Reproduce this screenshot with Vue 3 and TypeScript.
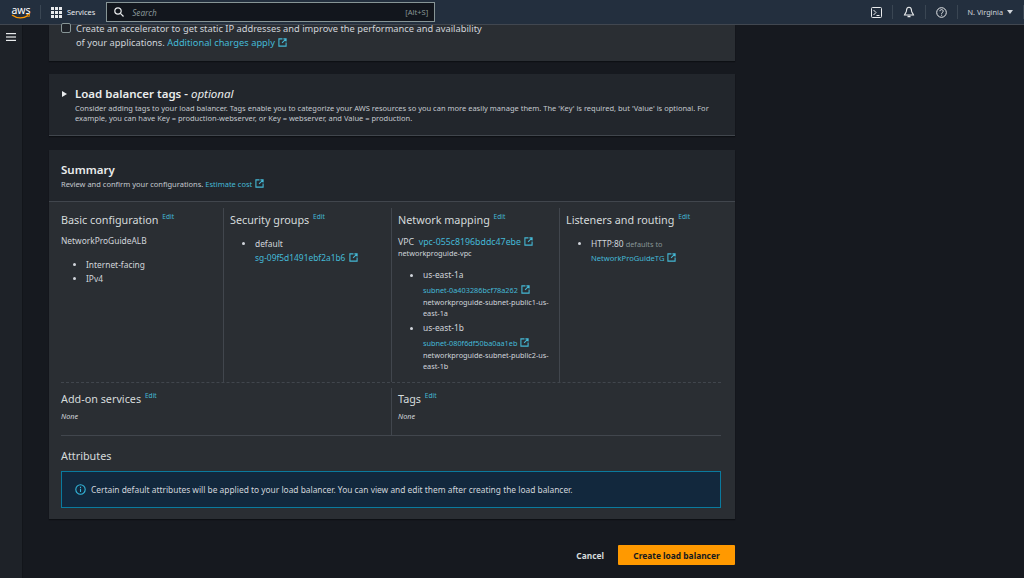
<script setup lang="ts">
interface Sub { zone: string; id: string; name: string }
const subnets: Sub[] = [
  { zone: 'us-east-1a', id: 'subnet-0a403286bcf78a262', name: 'networkproguide-subnet-public1-us-east-1a' },
  { zone: 'us-east-1b', id: 'subnet-080f6df50ba0aa1eb', name: 'networkproguide-subnet-public2-us-east-1b' },
]
</script>

<template>
  <div class="page">
    <header class="top">
      <div class="logo">
        <span class="aws">aws</span>
        <svg class="smile" width="20" height="6" viewBox="0 0 20 6"><path d="M1 1c5 3.600 11 3.600 16 .6" fill="none" stroke="#f90" stroke-width="1.300"/><path d="M15.500 .6l3-.4-.7 2.800" fill="none" stroke="#f90" stroke-width="1"/></svg>
      </div>
      <span class="tsep"></span>
      <svg class="grid-ic" width="11" height="11" viewBox="0 0 11 11" fill="#e9ebed"><rect width="3" height="3"/><rect x="4" width="3" height="3"/><rect x="8" width="3" height="3"/><rect y="4" width="3" height="3"/><rect x="4" y="4" width="3" height="3"/><rect x="8" y="4" width="3" height="3"/><rect y="8" width="3" height="3"/><rect x="4" y="8" width="3" height="3"/><rect x="8" y="8" width="3" height="3"/></svg>
      <span class="svc">Services</span>
      <div class="search">
        <svg width="10" height="10" viewBox="0 0 10 10" fill="none" stroke="#e9ebed" stroke-width="1.200"><circle cx="4" cy="4" r="3.200"/><path d="M6.400 6.400L9.500 9.500"/></svg>
        <span class="ph">Search</span>
        <span class="kbd">[Alt+S]</span>
      </div>
      <div class="tright">
        <svg width="11" height="11" viewBox="0 0 11 11" fill="none" stroke="#e9ebed" stroke-width="1"><rect x=".5" y=".5" width="10" height="10" rx="1"/><path d="M2.500 3l2.500 2.500L2.500 8M5.500 8.500h3"/></svg>
        <span class="isep dotted"></span>
        <svg width="12" height="12" viewBox="0 0 12 12" fill="none" stroke="#e9ebed" stroke-width="1.100"><path d="M6 1.200C4 1.200 3.500 3 3.500 4.500c0 2-1.500 3-2 4.500h9c-.5-1.500-2-2.500-2-4.500C8.500 3 8 1.200 6 1.200z"/><path d="M4.500 10.500h3" stroke-width="1.500"/></svg>
        <span class="isep"></span>
        <svg width="11" height="11" viewBox="0 0 11 11" fill="none" stroke="#e9ebed" stroke-width="1"><circle cx="5.500" cy="5.500" r="4.800"/><path d="M3.900 4.200c0-2.100 3.300-2.100 3.300 0 0 1.200-1.600 1.300-1.600 2.600M5.600 7.700v1"/></svg>
        <span class="isep"></span>
        <span class="region">N. Virginia</span>
        <svg class="caret" width="6" height="4" viewBox="0 0 6 4" fill="#d1d5db"><path d="M0 0h6L3 4z"/></svg>
        <span class="isep last"></span>
      </div>
    </header>

    <div class="body">
      <aside class="side">
        <svg width="10" height="8" viewBox="0 0 10 8" fill="#e9ebed"><rect width="10" height="1.200"/><rect y="3.400" width="10" height="1.200"/><rect y="6.800" width="10" height="1.200"/></svg>
      </aside>

      <main class="content">
        <section class="card accel">
          <span class="check"></span>
          <p>Create an accelerator to get static IP addresses and improve the performance and availability of your applications. <a>Additional charges apply <svg class="ext" viewBox="0 0 10 10"><path d="M5 1H1v8h8V5M6 1h3v3M9 1L4.500 5.500"/></svg></a></p>
        </section>

        <section class="card tags">
          <svg class="tri" width="5" height="6" viewBox="0 0 5 6" fill="#e9ebed"><path d="M0 0l5 3-5 3z"/></svg>
          <div>
            <h2>Load balancer tags - <i>optional</i></h2>
            <p class="small">Consider adding tags to your load balancer. Tags enable you to categorize your AWS resources so you can more easily manage them. The 'Key' is required, but 'Value' is optional. For example, you can have Key = production-webserver, or Key = webserver, and Value = production.</p>
          </div>
        </section>

        <section class="card summary">
          <div class="shead">
            <h2>Summary</h2>
            <p class="small">Review and confirm your configurations. <a>Estimate cost <svg class="ext" viewBox="0 0 10 10"><path d="M5 1H1v8h8V5M6 1h3v3M9 1L4.500 5.500"/></svg></a></p>
          </div>
          <div class="sbody">
            <div class="cols">
              <div class="col">
                <h3>Basic configuration <a class="edit">Edit</a></h3>
                <p class="albname">NetworkProGuideALB</p>
                <ul class="basic"><li>Internet-facing</li><li>IPv4</li></ul>
              </div>
              <div class="col">
                <h3>Security groups <a class="edit">Edit</a></h3>
                <ul class="sg"><li>default<br><a>sg-09f5d1491ebf2a1b6 <svg class="ext" viewBox="0 0 10 10"><path d="M5 1H1v8h8V5M6 1h3v3M9 1L4.500 5.500"/></svg></a></li></ul>
              </div>
              <div class="col">
                <h3>Network mapping <a class="edit">Edit</a></h3>
                <p class="vpc">VPC &nbsp;<a>vpc-055c8196bddc47ebe <svg class="ext" viewBox="0 0 10 10"><path d="M5 1H1v8h8V5M6 1h3v3M9 1L4.500 5.500"/></svg></a></p>
                <p class="tiny vname">networkproguide-vpc</p>
                <ul class="subs">
                  <li v-for="s in subnets" :key="s.id">
                    <span class="zone">{{ s.zone }}</span>
                    <a class="tiny subid">{{ s.id }} <svg class="ext" viewBox="0 0 10 10"><path d="M5 1H1v8h8V5M6 1h3v3M9 1L4.500 5.500"/></svg></a>
                    <span class="tiny subname">{{ s.name }}</span>
                  </li>
                </ul>
              </div>
              <div class="col">
                <h3>Listeners and routing <a class="edit">Edit</a></h3>
                <ul class="lis"><li>HTTP:80 <span class="def">defaults to</span><br><a class="tg">NetworkProGuideTG <svg class="ext" viewBox="0 0 10 10"><path d="M5 1H1v8h8V5M6 1h3v3M9 1L4.500 5.500"/></svg></a></li></ul>
              </div>
            </div>
            <div class="addon">
              <div class="ao">
                <h3>Add-on services <a class="edit">Edit</a></h3>
                <p class="none">None</p>
              </div>
              <div class="ao">
                <h3>Tags <a class="edit">Edit</a></h3>
                <p class="none">None</p>
              </div>
            </div>
            <h3 class="attr">Attributes</h3>
            <div class="alert">
              <svg width="11" height="11" viewBox="0 0 11 11" fill="none" stroke="#33b5d9" stroke-width="1.100"><circle cx="5.500" cy="5.500" r="4.700"/><path d="M5.500 4.800v3.200M5.500 2.800v1.100"/></svg>
              <span>Certain default attributes will be applied to your load balancer. You can view and edit them after creating the load balancer.</span>
            </div>
          </div>
        </section>

        <footer class="actions">
          <button class="cancel">Cancel</button>
          <button class="create">Create load balancer</button>
        </footer>
      </main>
    </div>
  </div>
</template>

<style>
html, body { margin: 0; background: #16191f; }
</style>

<style scoped>
.page { width: 1024px; height: 578px; overflow: hidden; background: #16191f; font-family: "Noto Sans", sans-serif; color: #d1d5db; font-size: 9.300px; }
p, h2, h3, ul { margin: 0; padding: 0; }
a { color: #44b9d6; }
.top { height: 24px; box-sizing: content-box; background: #232f3e; border-bottom: 1px solid #414750; display: flex; align-items: center; }
.logo { width: 22px; margin-left: 10px; height: 20px; position: relative; }
.aws { display: block; color: #fff; font-size: 10.500px; line-height: 12px; margin-top: 2px; text-align: center; }
.smile { position: absolute; left: 1px; top: 12px; }
.tsep { width: 1px; height: 14px; background: #3a4653; margin-left: 8px; margin-right: 10px; }
.svc { color: #e9ebed; font-size: 7.400px; margin-left: 5px; margin-right: 11px; }
.search { width: 313px; height: 18px; box-sizing: content-box; background: #12161d; border: 1px solid #879596; display: flex; align-items: center; padding-left: 7px; padding-right: 6px; width: 329px; box-sizing: border-box; height: 20px; }
.ph { font-style: italic; color: #879596; font-size: 8.200px; margin-left: 8px; }
.kbd { margin-left: auto; color: #879596; font-size: 7.600px; }
.tright { margin-left: auto; display: flex; align-items: center; padding-right: 0; }
.tright > svg:first-child { margin-right: 10px; }
.isep { width: 1px; height: 14px; background: #3a4653; margin: 0 10px; }
.isep.dotted { margin-right: 10px; margin-left: 0; }
.isep.last { margin: 0 0 0 10px; }
.region { font-size: 7.300px; color: #d1d5db; }
.caret { margin-left: 4px; }
.body { display: flex; height: 553px; }
.side { width: 23px; background: #1e2228; border-right: 1px solid #12151a; box-sizing: border-box; padding: 8px 0 0 6px; }
.side svg { display: block; }
.content { width: 686px; margin-left: 26px; display: flex; flex-direction: column; }
.card { background: #2a2e33; box-shadow: 0 1px 1px #0d1014; }
.accel { height: 36px; display: flex; padding-left: 12px; margin-bottom: 13px; background: #2a2e33; }
.check { width: 8px; height: 8px; border: 1px solid #879596; border-radius: 2px; margin-top: -2px; flex: none; background: #1f2329; }
.accel p { margin-left: 5px; width: 410px; font-size: 9.300px; line-height: 14px; margin-top: -3px; }
.ext { width: 9px; height: 9px; vertical-align: -1px; fill: none; stroke: #44b9d6; stroke-width: 1.200; margin-left: 1px; }
.tags { height: 62px; background: #22262c; display: flex; padding-left: 13px; border-bottom: 1px solid #41464d; box-sizing: border-box; margin-bottom: 14px; }
.tri { margin-top: 17px; flex: none; }
.tags > div { margin-left: 8px; padding-top: 11px; }
.tags h2 { font-size: 11.500px; line-height: 18px; font-weight: 600; color: #eaeded; }
.tags h2 i { font-weight: 400; }
.small { font-size: 7.500px; line-height: 10px; color: #c4c9cf; }
.summary { background: #2a2e33; height: 369px; }
.shead { height: 52px; box-sizing: border-box; background: #22262c; padding: 12px 12px 0; border-bottom: 1px solid #41464d; }
.shead h2 { font-size: 11.500px; line-height: 16px; color: #eaeded; font-weight: 600; }
.shead .small { margin-top: 1px; }
.sbody { padding: 6px 14px 0 12px; }
.cols { display: grid; grid-template-columns: 162px 168px 168px 162px; height: 174px; border-bottom: 1px dashed #41464d; }
.col { padding-left: 6px; border-left: 1px solid #41464d; box-sizing: border-box; padding-top: 1px; }
.col:first-child { border-left: none; padding-left: 0; }
h3 { font-size: 10.800px; line-height: 16px; font-weight: 400; color: #d5dbdb; }
.edit { font-size: 6.600px; vertical-align: 5px; margin-left: 1px; }
.albname { font-size: 8.400px; margin-top: 7px; line-height: 12px; }
.basic { list-style: disc; padding-left: 25px; margin-top: 11px; font-size: 8.400px; line-height: 14px; }
.sg { list-style: disc; padding-left: 25px; margin-top: 9px; font-size: 8.400px; line-height: 14px; }
.vpc { font-size: 8.800px; margin-top: 8px; line-height: 12px; }
.vname { margin-top: 0; }
.tiny { font-size: 7.300px; line-height: 10px; display: block; }
.subs { list-style: disc; padding-left: 25px; margin-top: 10px; }
.zone { font-size: 8.400px; display: block; line-height: 13px; }
.subs li { padding-bottom: 3px; }
.subid { margin-top: 2px; line-height: 14px; }
.subname { line-height: 10.500px; width: 132px; }
.lis { list-style: disc; padding-left: 25px; margin-top: 9px; font-size: 8.400px; line-height: 14px; }
.def { font-size: 7.300px; color: #879596; }
.tg { font-size: 7.600px; }
.addon { display: grid; grid-template-columns: 330px 330px; height: 53px; border-bottom: 1px solid #41464d; box-sizing: border-box; margin-top: 0; padding-top: 5px; }
.ao + .ao { border-left: 1px solid #41464d; padding-left: 6px; height: 47px; }
.none { font-size: 7.300px; font-style: italic; margin-top: 4px; color: #d1d5db; }
.attr { margin-top: 12px; }
.alert { margin-top: 7px; height: 37px; box-sizing: border-box; background: #12283d; border: 1px solid #0a7a9e; display: flex; align-items: center; padding-left: 13px; gap: 5px; font-size: 8.400px; color: #d1d5db; }
.actions { display: flex; justify-content: flex-end; align-items: center; margin-top: 26px; }
button { font-family: inherit; border: none; font-weight: 700; }
.cancel { background: none; color: #d5dbdb; font-size: 8.400px; padding: 0; margin-right: 14px; }
.create { background: #ff9900; color: #16191f; font-size: 8.400px; width: 117px; height: 20px; padding: 0; border-radius: 1px; }
</style>
